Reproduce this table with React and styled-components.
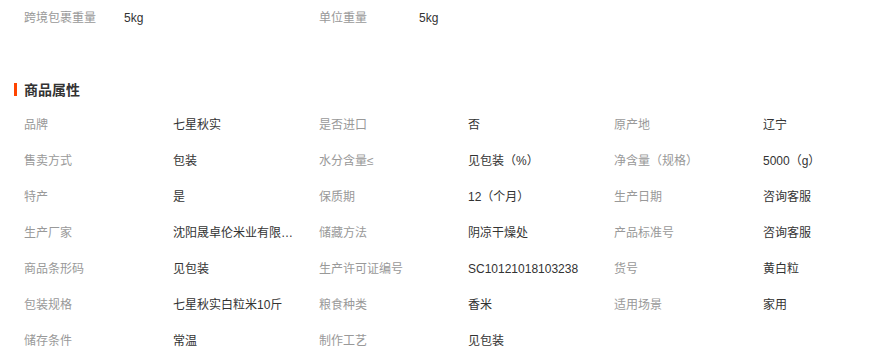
import React from 'react'
import styled, { createGlobalStyle } from 'styled-components'

const GlobalStyle = createGlobalStyle`
  body {
    margin: 0;
    background: #fff;
    font-family: "Liberation Sans", "Noto Sans CJK SC", sans-serif;
    font-size: 12px;
    color: #333;
  }
`

const topAttrs = [
  ['跨境包裹重量', '5kg'],
  ['单位重量', '5kg'],
]

const attrs = [
  ['品牌', '七星秋实'],
  ['是否进口', '否'],
  ['原产地', '辽宁'],
  ['售卖方式', '包装'],
  ['水分含量≤', '见包装（%）'],
  ['净含量（规格）', '5000（g）'],
  ['特产', '是'],
  ['保质期', '12（个月）'],
  ['生产日期', '咨询客服'],
  ['生产厂家', '沈阳晟卓伦米业有限公司'],
  ['储藏方法', '阴凉干燥处'],
  ['产品标准号', '咨询客服'],
  ['商品条形码', '见包装'],
  ['生产许可证编号', 'SC10121018103238'],
  ['货号', '黄白粒'],
  ['包装规格', '七星秋实白粒米10斤'],
  ['粮食种类', '香米'],
  ['适用场景', '家用'],
  ['储存条件', '常温'],
  ['制作工艺', '见包装'],
]

function ProductAttrs() {
  return (
    <Wrap>
      <TopRow>
        {topAttrs.map(([k, v]) => (
          <Cell key={k}>
            <Label $w={100}>{k}</Label>
            <Value>{v}</Value>
          </Cell>
        ))}
      </TopRow>
      <Title>商品属性</Title>
      <Grid>
        {attrs.map(([k, v]) => (
          <Cell key={k}>
            <Label $w={149}>{k}</Label>
            <Value title={v}>{v}</Value>
          </Cell>
        ))}
      </Grid>
    </Wrap>
  )
}

export default function App() {
  return (
    <>
      <GlobalStyle />
      <ProductAttrs />
    </>
  )
}

const Wrap = styled.div`
  width: 895px;
`

const TopRow = styled.div`
  display: grid;
  grid-template-columns: repeat(2, 295px);
  height: 34px;
  align-items: center;
`

const Cell = styled.div`
  display: flex;
  align-items: center;
  padding-left: 24px;
  height: 36px;
  line-height: 36px;
`

const Label = styled.span`
  width: ${(p) => p.$w}px;
  flex: none;
  color: #999;
`

const Value = styled.span`
  width: 124px;
  color: #333;
  white-space: nowrap;
  overflow: hidden;
  text-overflow: ellipsis;
`

const Title = styled.h3`
  position: relative;
  margin: 46px 0 7px;
  padding-left: 24px;
  height: 20px;
  line-height: 20px;
  font-size: 14px;
  font-weight: bold;
  color: #333;
  &::before {
    content: '';
    position: absolute;
    left: 14px;
    top: 3px;
    width: 3px;
    height: 13px;
    background: #ff4400;
  }
`

const Grid = styled.div`
  display: grid;
  grid-template-columns: repeat(3, 295px);
`
